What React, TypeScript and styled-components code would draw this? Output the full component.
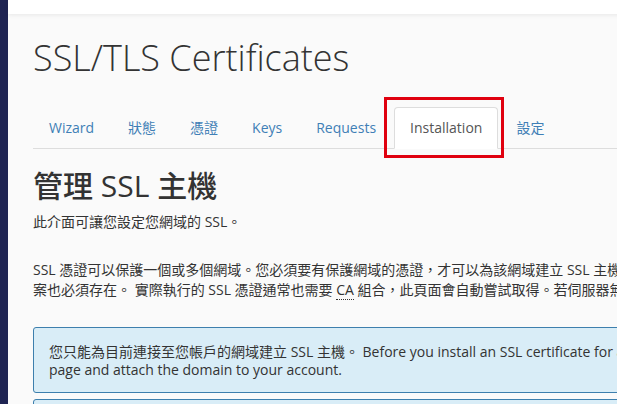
import React from 'react'
import styled, { createGlobalStyle } from 'styled-components'

const GlobalStyle = createGlobalStyle`
  html, body {
    margin: 0;
    padding: 0;
    overflow: hidden;
    background: #fafafa;
  }
  body {
    font-family: 'Open Sans', 'Noto Sans CJK TC', sans-serif;
    font-size: 14px;
    color: #333;
  }
`

const Shell = styled.div`
  display: flex;
  min-height: 404px;
`

const Sidebar = styled.div`
  width: 8px;
  flex-shrink: 0;
  background: #1f2452;
`

const Main = styled.div`
  flex: 1;
  display: flex;
  flex-direction: column;
`

const TopBar = styled.div`
  height: 14px;
  background: #fff;
  box-shadow: 0 1px 4px rgba(0, 0, 0, 0.08);
`

const Content = styled.div`
  width: 1100px;
  padding: 0 0 0 25px;
`

const Title = styled.h1`
  margin: 20px 0 25px;
  font-weight: 300;
  font-size: 36px;
  line-height: 48px;
  color: #333;
`

const TabList = styled.ul`
  display: flex;
  list-style: none;
  margin: 0;
  padding: 0;
  border-bottom: 1px solid #ddd;
`

const Tab = styled.li<{ $active?: boolean }>`
  position: relative;
  margin: 0 2px -1px 0;
  padding: 10px 15px;
  line-height: 20px;
  font-size: 14px;
  color: ${(p) => (p.$active ? '#555' : '#3f7fb6')};
  background: ${(p) => (p.$active ? '#fff' : 'transparent')};
  border: 1px solid ${(p) => (p.$active ? '#ddd' : 'transparent')};
  border-bottom-color: ${(p) => (p.$active ? '#fff' : 'transparent')};
  border-radius: 4px 4px 0 0;
`

const Highlight = styled.span`
  position: absolute;
  top: -11px;
  left: -11px;
  right: -7px;
  bottom: -10px;
  border: 3px solid #e0000f;
  pointer-events: none;
`

const Heading = styled.h2`
  margin: 19px 0 8px;
  font-size: 30px;
  font-weight: 500;
  line-height: 36px;
  color: #333;
`

const Lead = styled.p`
  margin: 0 0 28px;
  line-height: 20px;
`

const Para = styled.p`
  margin: 0 0 27px;
  line-height: 20px;
  white-space: nowrap;
`

const Abbr = styled.abbr`
  text-decoration: none;
  border-bottom: 1px dotted #333;
`

const Alert = styled.div`
  border: 1px solid #3d7fad;
  border-radius: 3px;
  background: #d9edf7;
  padding: 15px 15px 13px;
  line-height: 18px;
  color: #333;
  white-space: nowrap;
  margin-bottom: 6px;
`

const tabs = ['Wizard', '狀態', '憑證', 'Keys', 'Requests', 'Installation', '設定']

export default function App() {
  return (
    <>
      <GlobalStyle />
      <Shell>
        <Sidebar />
        <Main>
          <TopBar />
          <Content>
            <Title>SSL/TLS Certificates</Title>
            <TabList>
              {tabs.map((t) => (
                <Tab key={t} $active={t === 'Installation'}>
                  {t}
                  {t === 'Installation' && <Highlight />}
                </Tab>
              ))}
            </TabList>
            <Heading>管理 SSL 主機</Heading>
            <Lead>此介面可讓您設定您網域的 SSL。</Lead>
            <Para>
              SSL 憑證可以保護一個或多個網域。您必須要有保護網域的憑證，才可以為該網域建立 SSL 主機。 憑證的私密金鑰檔
              <br />
              案也必須存在。 實際執行的 SSL 憑證通常也需要 <Abbr title="Certificate Authority">CA</Abbr> 組合，此頁面會自動嘗試取得。若伺服器無法找到 CA 組合，您必須自行提供。
            </Para>
            <Alert>
              您只能為目前連接至您帳戶的網域建立 SSL 主機。 Before you install an SSL certificate for a new domain, use the Domains interface's Create A New Domain
              <br />
              page and attach the domain to your account.
            </Alert>
            <Alert>
              The system will automatically install the certificate.
            </Alert>
          </Content>
        </Main>
      </Shell>
    </>
  )
}
